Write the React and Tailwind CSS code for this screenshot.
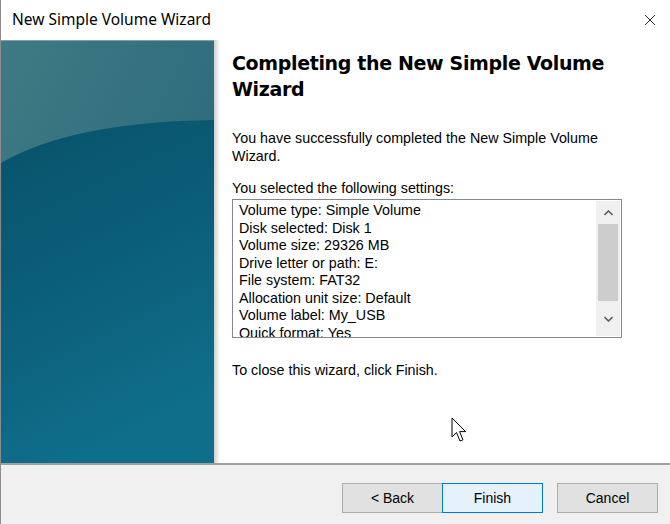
import React from "react";

function Panel() {
  return (
    <svg width="213" height="423" viewBox="0 0 213 423" className="block">
      <defs>
        <linearGradient id="top" x1="0" y1="0" x2="1" y2="1">
          <stop offset="0" stopColor="#3f7a83" />
          <stop offset="1" stopColor="#24647a" />
        </linearGradient>
        <linearGradient id="bot" x1="0" y1="0" x2="0.3" y2="1">
          <stop offset="0" stopColor="#08526b" />
          <stop offset="0.5" stopColor="#0b5e79" />
          <stop offset="1" stopColor="#0f6e8a" />
        </linearGradient>
      </defs>
      <rect x="0" y="0" width="213" height="423" fill="url(#top)" />
      <path d="M0 123 Q70 82 213 80 L213 423 L0 423 Z" fill="url(#bot)" />
      <rect x="0" y="0" width="213" height="1" fill="#7fa0a6" />
    </svg>
  );
}

function Cursor() {
  return (
    <svg width="18" height="27" viewBox="0 0 18 27" className="absolute left-[450px] top-[417px]">
      <path
        d="M1 1 L1 20 L5.5 15.5 L9 24 L12 22.8 L8.6 14.6 L14.6 14.6 Z"
        fill="#ffffff"
        stroke="#000000"
        strokeWidth="1"
        strokeLinejoin="miter"
      />
    </svg>
  );
}

const settings = [
  "Volume type: Simple Volume",
  "Disk selected: Disk 1",
  "Volume size: 29326 MB",
  "Drive letter or path: E:",
  "File system: FAT32",
  "Allocation unit size: Default",
  "Volume label: My_USB",
  "Quick format: Yes",
];

export default function App() {
  return (
    <div className="relative w-[670px] h-[524px] overflow-hidden bg-white border-l border-[#8c8c8c] flex flex-col font-['Liberation_Sans',Arial,sans-serif] text-black">
      {/* title bar */}
      <div className="h-[40px] flex items-center justify-between pl-[11px] pr-[14px] shrink-0">
        <span className="text-[15.5px] font-['Noto_Sans',sans-serif] text-[#000] leading-none">
          New Simple Volume Wizard
        </span>
        <svg width="12" height="12" viewBox="0 0 12 12">
          <path d="M1 1 L11 11 M11 1 L1 11" stroke="#222" strokeWidth="1" />
        </svg>
      </div>
      {/* main */}
      <div className="flex h-[423px] shrink-0">
        <Panel />
        <div className="w-[6px] bg-gradient-to-r from-[#cfcfcf] to-white shrink-0" />
        <div className="flex flex-col pl-[12px] pt-[10px] w-[440px]">
          <h1 className="font-['DejaVu_Sans',Verdana,sans-serif] font-bold text-[19px] leading-[26px] tracking-[-0.35px]">
            Completing the New Simple Volume
            <br />
            Wizard
          </h1>
          <p className="mt-[27px] text-[14.3px] leading-[18px]">
            You have successfully completed the New Simple Volume
            <br />
            Wizard.
          </p>
          <p className="mt-[14px] text-[14.3px] leading-[18px]">You selected the following settings:</p>
          <div className="mt-[2px] w-[390px] h-[139px] border border-[#828790] flex overflow-hidden">
            <div className="flex-1 pl-[6px] pt-[2px] text-[14.3px] leading-[17.5px] overflow-hidden">
              {settings.map((s) => (
                <div key={s} className="whitespace-nowrap">
                  {s}
                </div>
              ))}
            </div>
            <div className="w-[24px] bg-[#f0f0f0] flex flex-col items-center mr-[1px] my-[1px]">
              <div className="h-[23px] flex items-center justify-center">
                <svg width="9" height="6" viewBox="0 0 9 6">
                  <path d="M0.5 5 L4.5 1 L8.5 5" fill="none" stroke="#606060" strokeWidth="1.6" />
                </svg>
              </div>
              <div className="w-[20px] h-[77px] bg-[#cdcdcd]" />
              <div className="flex-1 flex items-center justify-center">
                <svg width="9" height="6" viewBox="0 0 9 6">
                  <path d="M0.5 1 L4.5 5 L8.5 1" fill="none" stroke="#606060" strokeWidth="1.6" />
                </svg>
              </div>
            </div>
          </div>
          <p className="mt-[23px] text-[14.3px] leading-[18px]">To close this wizard, click Finish.</p>
        </div>
      </div>
      {/* separator */}
      <div className="h-[2px] bg-[#a0a0a0] shrink-0" />
      {/* footer */}
      <div className="flex-1 bg-[#f0f0f0] flex items-start justify-end pt-[18px] pr-[12px]">
        <button className="w-[101px] h-[30px] bg-[#e1e1e1] border border-[#adadad] text-[14px] leading-none">
          &lt; Back
        </button>
        <button className="w-[101px] h-[30px] bg-[#e5f1fb] border border-[#0078d7] text-[14px] leading-none -ml-px">
          Finish
        </button>
        <button className="ml-[14px] w-[101px] h-[30px] bg-[#e1e1e1] border border-[#adadad] text-[14px] leading-none">
          Cancel
        </button>
      </div>
      <Cursor />
    </div>
  );
}
